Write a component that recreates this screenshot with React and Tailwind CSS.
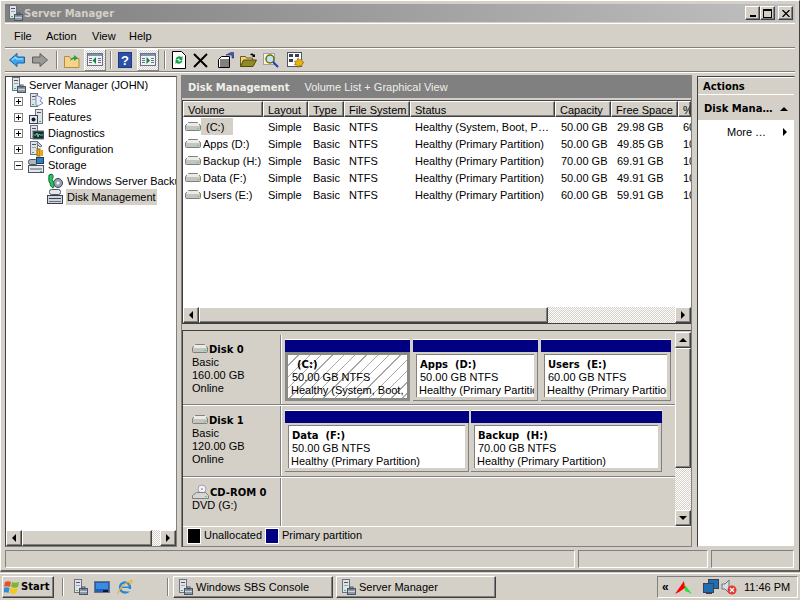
import React from 'react';

const raised = 'border border-t-white border-l-white border-r-[#404040] border-b-[#404040] shadow-[inset_-1px_-1px_0_#808080]';
const sunken = 'border border-t-[#808080] border-l-[#808080] border-r-white border-b-white';
const dither = 'bg-[repeating-conic-gradient(#ffffff_0_25%,#d4d0c8_0_50%)] bg-[length:2px_2px]';
const bold = "font-bold font-['DejaVu_Sans'] text-[10px]";

const Svg = ({ w = 16, h = 16, children, className = '' }) => (
  <svg width={w} height={h} viewBox={`0 0 ${w} ${h}`} className={`shrink-0 ${className}`}>{children}</svg>
);

const Tower = () => (
  <>
    <rect x="2.5" y="0.5" width="7" height="13" fill="#dfe3e8" stroke="#6b7280" />
    <rect x="4" y="3" width="4" height="1" fill="#4b5563" />
    <rect x="4" y="6" width="4" height="1" fill="#9ca3af" />
    <rect x="4" y="11" width="2" height="1" fill="#22c55e" />
  </>
);

const ServerIcon = () => (
  <Svg>
    <Tower />
    <rect x="7.5" y="9.5" width="8" height="6" fill="#8d99a6" stroke="#4b5563" />
    <rect x="10" y="8" width="3" height="2" fill="none" stroke="#4b5563" />
    <rect x="8" y="12" width="7" height="1" fill="#d1d5db" />
  </Svg>
);

const RolesIcon = () => (
  <Svg>
    <Tower />
    <path d="M8 2l6 3-2 3 3 2-5 3-2-1z" fill="#eef2ff" stroke="#7c8db5" />
  </Svg>
);

const FeaturesIcon = () => (
  <Svg>
    <rect x="7.5" y="0.5" width="7" height="14" fill="#dfe3e8" stroke="#6b7280" />
    <rect x="9" y="3" width="4" height="1" fill="#4b5563" />
    <rect x="1.5" y="6.5" width="8" height="8" fill="#e5e7eb" stroke="#374151" />
    <circle cx="5.5" cy="10.5" r="2" fill="#111827" />
    <rect x="11" y="12" width="2" height="1" fill="#22c55e" />
  </Svg>
);

const DiagIcon = () => (
  <Svg>
    <Tower />
    <rect x="5" y="6" width="11" height="8" fill="#1f2937" stroke="#6b7280" />
    <path d="M6 10h2l1-2 1 4 1-3 1 1h3" fill="none" stroke="#4ade80" />
  </Svg>
);

const ConfigIcon = () => (
  <Svg>
    <Tower />
    <path d="M10 1l4 4-2 1-3-3z" fill="#cbd5e1" stroke="#6b7280" />
    <rect x="9" y="8" width="3" height="7" fill="#eab308" stroke="#a16207" />
    <rect x="13" y="9" width="2" height="6" fill="#f59e0b" />
  </Svg>
);

const StorageIcon = () => (
  <Svg>
    <rect x="0.5" y="2.5" width="9" height="5" rx="2" fill="#aeb6bf" stroke="#4b5563" />
    <rect x="8.5" y="0.5" width="7" height="6" fill="#2f7fc1" stroke="#1e3a5f" />
    <rect x="0.5" y="8.5" width="15" height="7" fill="#e5e7eb" stroke="#4b5563" />
    <rect x="2" y="11" width="12" height="2" fill="#9ca3af" />
    <rect x="12" y="14" width="2" height="1" fill="#22c55e" />
  </Svg>
);

const BackupIcon = () => (
  <Svg>
    <circle cx="11" cy="10" r="4.5" fill="#9ca3af" stroke="#374151" />
    <circle cx="11" cy="10" r="1.5" fill="#f3f4f6" />
    <path d="M5 1c2 2 1 4 0 6 2 2 3 5 1 8-2-1-3-3-3-5C1 8 2 5 2 2z" fill="#22c55e" stroke="#166534" />
  </Svg>
);

const DiskMgmtIcon = () => (
  <Svg>
    <rect x="2.5" y="0.5" width="11" height="5" rx="2" fill="#e5e7eb" stroke="#4b5563" />
    <rect x="0.5" y="6.5" width="15" height="8" fill="#d1d5db" stroke="#374151" />
    <rect x="2" y="9" width="12" height="1" fill="#374151" />
    <rect x="2" y="12" width="12" height="1" fill="#6b7280" />
  </Svg>
);

const DriveIcon = () => (
  <Svg w={16} h={10}>
    <path d="M3.5 0.5h9l3 3v4a1 1 0 0 1-1 1h-13a1 1 0 0 1-1-1v-4z" fill="#c4c4c0" stroke="#808080" />
    <rect x="2" y="1" width="12" height="3" fill="#ecebe6" />
    <rect x="12" y="6" width="2" height="1" fill="#4ade80" />
  </Svg>
);

const CdIcon = () => (
  <Svg w={17} h={16}>
    <circle cx="10" cy="5" r="4" fill="#f3f4f6" stroke="#9ca3af" />
    <circle cx="10" cy="5" r="1" fill="#c084fc" />
    <path d="M4.5 8.5h9l3 3v3h-16v-3z" fill="#d6d6d2" stroke="#808080" />
    <rect x="13" y="12" width="2" height="1" fill="#4ade80" />
  </Svg>
);

const Arrow = ({ dir }) => {
  const paths = {
    l: 'M4 0v8L0 4z',
    r: 'M0 0v8l4-4z',
    u: 'M4 0L8 4H0z',
    d: 'M0 0h8L4 4z',
  };
  const size = dir === 'l' || dir === 'r' ? [4, 8] : [8, 4];
  return <Svg w={size[0]} h={size[1]}><path d={paths[dir]} fill="#000" /></Svg>;
};

const ScrollBtn = ({ dir }) => (
  <div className={`w-4 h-4 shrink-0 flex items-center justify-center bg-[#d4d0c8] ${raised}`}>
    <Arrow dir={dir} />
  </div>
);

const Expander = ({ open }) => (
  <Svg w={9} h={9}>
    <rect x="0.5" y="0.5" width="8" height="8" fill="#fff" stroke="#808080" />
    <rect x="2" y="4" width="5" height="1" fill="#000" />
    {!open && <rect x="4" y="2" width="1" height="5" fill="#000" />}
  </Svg>
);

const TreeRow = ({ icon, text, open }) => (
  <div className="h-4 flex items-center pl-[8px] whitespace-nowrap">
    <Expander open={open} />
    <div className="ml-[5px]">{icon}</div>
    <span className="ml-[4px]">{text}</span>
  </div>
);

const columns = [
  ['Volume', 80],
  ['Layout', 45],
  ['Type', 36],
  ['File System', 66],
  ['Status', 145],
  ['Capacity', 56],
  ['Free Space', 67],
  ['%', 13],
];

const volumes = [
  ['(C:)', 'Healthy (System, Boot, P…', '50.00 GB', '29.98 GB', '60'],
  ['Apps (D:)', 'Healthy (Primary Partition)', '50.00 GB', '49.85 GB', '10'],
  ['Backup (H:)', 'Healthy (Primary Partition)', '70.00 GB', '69.91 GB', '10'],
  ['Data (F:)', 'Healthy (Primary Partition)', '50.00 GB', '49.91 GB', '10'],
  ['Users (E:)', 'Healthy (Primary Partition)', '60.00 GB', '59.91 GB', '10'],
];

const Partition = ({ w, title, size, status, selected, mr = 'mr-[3px]' }) => (
  <div className={`${w} ${mr} shrink-0 flex flex-col`}>
    <div className="h-[13px] shrink-0 bg-[#000080] border-t border-white" />
    <div className={`flex-1 min-h-0 ${selected ? 'p-[3px] bg-[#8a8a84]' : 'p-[3px] pt-[2px] bg-[#d4d0c8] border-b border-r border-[#808080]'}`}>
      <div className={`h-full overflow-hidden whitespace-nowrap pt-[3px] leading-[13px] ${selected ? 'pl-[3px] bg-[repeating-linear-gradient(135deg,#ffffff_0_7px,#a8a8a8_7px_8px)]' : 'pl-[2px] bg-white border-t border-l border-[#808080]'}`}>
        <div className={`${bold} whitespace-pre ${selected ? 'pl-[6px]' : 'pl-[1px]'}`}>{title}</div>
        <div className="pl-[1px]">{size}</div>
        <div>{status}</div>
      </div>
    </div>
  </div>
);

const DiskLabel = ({ icon, name, lines }) => (
  <div className="w-[98px] shrink-0 pl-[9px] pt-[6px] leading-[13px] border-r border-[#808080] shadow-[1px_0_0_#fff] overflow-hidden">
    <div className="flex items-center h-[15px]">
      {icon}
      <span className={`${bold} ml-[1px] pt-[2px]`}>{name}</span>
    </div>
    {lines.map((l) => <div key={l}>{l}</div>)}
  </div>
);

const ToolSep = ({ className }) => <div className={`w-[2px] h-[18px] border-l border-[#808080] bg-white shrink-0 ${className}`} />;

const ToggleBtn = ({ side, className }) => (
  <div className={`w-[22px] h-[22px] flex items-center justify-center shrink-0 ${dither} border border-t-white border-l-white border-r-[#808080] border-b-[#808080] ${className}`}>
    <Svg>
      <rect x="0.5" y="1.5" width="15" height="12" fill="#eef2f7" stroke="#6b7280" />
      <rect x="1" y="2" width="14" height="2" fill="#7c93b2" />
      <rect x="2" y="6" width="3" height="1" fill="#6b7280" />
      <rect x="2" y="8" width="3" height="1" fill="#6b7280" />
      <rect x="2" y="10" width="3" height="1" fill="#6b7280" />
      <rect x="11" y="6" width="3" height="1" fill="#6b7280" />
      <rect x="11" y="8" width="3" height="1" fill="#6b7280" />
      <rect x="11" y="10" width="3" height="1" fill="#6b7280" />
      <path d={side === 'l' ? 'M9 5v7L5.5 8.5z' : 'M6.5 5v7L10 8.5z'} fill="#15803d" />
    </Svg>
  </div>
);

const Toolbar = () => (
  <div className="h-6 flex items-center pl-[4px] border-t border-white border-b border-b-[#808080]">
    <Svg>
      <path d="M0.5 8L8 1.5V5h7.500v6H8v3.500z" fill="#38a6f0" stroke="#1d5fa8" />
      <path d="M3 8l4-3v2h7" fill="none" stroke="#bfe6ff" />
    </Svg>
    <Svg className="ml-[7px]">
      <path d="M15.500 8L8 1.500V5H0.500v6H8v3.500z" fill="#9a9a96" stroke="#5d5d5a" />
    </Svg>
    <ToolSep className="ml-[8px]" />
    <Svg className="ml-[6px]">
      <path d="M0.500 4.500h5l1 2h8.500v9H0.500z" fill="#f2d58a" stroke="#b58d3c" />
      <path d="M6 9c1-3 3-4 4-4V3l4 3-4 3V7c-1 0-3 1-4 2z" fill="#2ea043" />
    </Svg>
    <ToggleBtn side="l" className="ml-[4px]" />
    <ToolSep className="ml-[4px]" />
    <Svg w={14} h={18} className="ml-[6px]">
      <rect x="0.500" y="1.500" width="13" height="15" fill="#2b4fa8" stroke="#1e3a7a" />
      <text x="7" y="14" textAnchor="middle" fontSize="13" fontWeight="bold" fill="#fff" fontFamily="Liberation Sans">?</text>
    </Svg>
    <ToggleBtn side="r" className="ml-[5px]" />
    <ToolSep className="ml-[5px]" />
    <Svg w={14} h={18} className="ml-[6px]">
      <path d="M0.500 0.500h9l4 4v13h-13z" fill="#fff" stroke="#000" />
      <path d="M3.500 8a4 4 0 0 1 6-2l1-1v4H7l1-1a2 2 0 0 0-3 1zM10.500 10a4 4 0 0 1-6 2l-1 1V9h3.500l-1 1a2 2 0 0 0 3-1z" fill="#15a34a" />
    </Svg>
    <Svg className="ml-[7px]">
      <path d="M1 2l13 13M14 2L1 15" stroke="#000" strokeWidth="2" fill="none" />
    </Svg>
    <Svg w={17} h={16} className="ml-[8px]">
      <path d="M4.500 4.500h8v11h-11v-8z" fill="#fff" stroke="#000" />
      <path d="M3 8h9M3 10h9M3 12h9M3 14h9" stroke="#000" />
      <path d="M9 3l6-3 2 1v5h-2V3z" fill="#4a5fb0" stroke="#1e2a6b" strokeWidth="0.600" />
    </Svg>
    <Svg w={17} h={16} className="ml-[6px]">
      <path d="M0.500 14.500v-10h5l1 1.500h6v2" fill="#f2d58a" stroke="#6b5a14" />
      <path d="M0.500 14.500l3-6.500h13l-3.500 6.500z" fill="#8f8a22" stroke="#4f4b0f" />
      <path d="M10 3c1-2 3-2 4 0l1-1v3h-3l1-1c-1-1-2-1-3-1z" fill="#000" />
    </Svg>
    <Svg className="ml-[6px]">
      <rect x="0.500" y="1.500" width="11" height="11" fill="#fdf6c8" stroke="#9ca3af" />
      <circle cx="7" cy="7" r="4" fill="#bfe3f3" stroke="#6b6b10" strokeWidth="1.500" />
      <path d="M10 10l5 5" stroke="#1d3fae" strokeWidth="2" />
    </Svg>
    <Svg w={17} h={16} className="ml-[8px]">
      <rect x="0.500" y="0.500" width="14" height="14" fill="#fff" stroke="#4b5563" />
      <rect x="2" y="2" width="4" height="3" fill="#374151" />
      <rect x="8" y="2" width="4" height="3" fill="#374151" />
      <rect x="2" y="7" width="4" height="3" fill="#374151" />
      <path d="M11 6l1.500 2 2.500-1 0 2.500 2 1-2 1.500 0 2.500-2.500-1-1.500 2-1-2.500-2.500 0 1-2-1-2 2.500 0z" fill="#eab308" stroke="#78600a" strokeWidth="0.600" />
    </Svg>
  </div>
);

const TitleBtn = ({ children }) => (
  <div className={`w-[15px] h-[14px] bg-[#d4d0c8] flex items-center justify-center ${raised}`}>{children}</div>
);

const TaskBtn = ({ icon, text, className }) => (
  <div className={`w-[160px] h-[22px] shrink-0 flex items-center pl-[3px] bg-[#d4d0c8] ${raised} ${className}`}>
    {icon}
    <span className="ml-[3px]">{text}</span>
  </div>
);

const FlagIcon = () => (
  <Svg>
    <path d="M1 3c2-1 4-1 6 0l-1 5c-2-1-4-1-6 0z" fill="#e8502a" />
    <path d="M8 3c2 1 4 1 7 0l-1 5c-2 1-5 1-7 0z" fill="#7cb82f" />
    <path d="M0 9c2-1 4-1 5.500 0l-1 5c-2-1-4-1-5.500 0z" fill="#2a8fd8" />
    <path d="M6.500 9c2 1 5 1 7 0l-1 5c-2 1-5 1-7 0z" fill="#f5c518" />
  </Svg>
);

const IeIcon = () => (
  <Svg>
    <circle cx="8" cy="8.500" r="5" fill="none" stroke="#2b86d9" strokeWidth="2.500" />
    <rect x="4" y="7.500" width="9" height="1.500" fill="#2b86d9" />
    <rect x="9" y="10" width="6" height="2.500" fill="#d4d0c8" />
    <path d="M1 15c0-4 6-11 13-13-1-1 1-1 1 0 0 2-2 3-3 3" fill="none" stroke="#f0b429" strokeWidth="1.200" />
  </Svg>
);

export default function App() {
  return (
    <div className="w-[800px] h-[600px] overflow-hidden bg-[#d4d0c8] text-[11px] text-black font-['Liberation_Sans',sans-serif] leading-none">
      {/* window */}
      <div className="h-[572px] flex flex-col pt-[3px] px-[4px] border-t border-l border-t-white border-l-white border-r border-r-[#404040] border-b-2 border-b-[#606060]">
        <div className="h-[18px] shrink-0 flex items-center px-[2px] bg-gradient-to-r from-[#808080] to-[#c0c0c0]">
          <ServerIcon />
          <span className={`ml-[1px] pt-[2px] text-[#d4d0c8] ${bold}`}>Server Manager</span>
          <div className="ml-auto flex">
            <TitleBtn><div className="w-[6px] h-[2px] bg-black mt-[6px]" /></TitleBtn>
            <TitleBtn><div className="w-[9px] h-[9px] border border-black border-t-2" /></TitleBtn>
            <div className="ml-[3px]">
              <TitleBtn>
                <Svg w={8} h={7}><path d="M0.500 0l7 7M7.500 0l-7 7" stroke="#000" strokeWidth="1.300" /></Svg>
              </TitleBtn>
            </div>
          </div>
        </div>

        <div className="mt-[1px] border-t border-white">
          <div className="h-6 flex items-center pl-[9px] pt-[2px] border-b border-b-[#808080]">
            <span className="w-[32px]">File</span>
            <span className="w-[46px]">Action</span>
            <span className="w-[37px]">View</span>
            <span>Help</span>
          </div>
          <Toolbar />
        </div>

        <div className="flex-1 min-h-0 flex pt-[2px] border-t border-white">
          {/* tree */}
          <div className="w-[172px] shrink-0 mt-[1px] mb-[1px] flex flex-col border border-t-[#404040] border-l-[#404040] border-r-[#808080] border-b-[#808080] bg-white">
            <div className="flex-1 min-h-0 overflow-hidden">
              <div className="h-4 flex items-center pl-[4px] whitespace-nowrap">
                <ServerIcon />
                <span className="ml-[3px]">Server Manager (JOHN)</span>
              </div>
              <TreeRow icon={<RolesIcon />} text="Roles" />
              <TreeRow icon={<FeaturesIcon />} text="Features" />
              <TreeRow icon={<DiagIcon />} text="Diagnostics" />
              <TreeRow icon={<ConfigIcon />} text="Configuration" />
              <TreeRow icon={<StorageIcon />} text="Storage" open />
              <div className="h-4 flex items-center pl-[41px] whitespace-nowrap">
                <BackupIcon />
                <span className="ml-[4px]">Windows Server Backup</span>
              </div>
              <div className="h-4 flex items-center pl-[41px] whitespace-nowrap">
                <DiskMgmtIcon />
                <span className="ml-[3px] px-[1px] h-4 flex items-center bg-[#d4d0c8]">Disk Management</span>
              </div>
            </div>
            <div className="h-4 shrink-0 flex bg-[#d4d0c8]">
              <ScrollBtn dir="l" />
              <div className={`flex-1 bg-[#d4d0c8] ${raised}`} />
              <div className={`w-2 ${dither}`} />
              <ScrollBtn dir="r" />
            </div>
          </div>

          {/* center */}
          <div className="w-[511px] shrink-0 ml-[4px] mb-[1px] flex flex-col border-l border-l-[#808080] border-r border-r-[#808080]">
            <div className="h-[23px] shrink-0 flex items-center pl-[6px] pt-[2px] bg-[#808080] text-[#f0eee8]">
              <span className={bold}>Disk Management</span>
              <span className="ml-[15px]">Volume List + Graphical View</span>
            </div>
            <div className="h-[2px] shrink-0 bg-[#d4d0c8]" />
            <div className="h-[224px] shrink-0 flex flex-col bg-white border-l border-t border-b border-[#404040]">
              <div className="h-[16px] shrink-0 flex overflow-hidden">
                {columns.map(([name, w]) => (
                  <div key={name} style={{ width: w }} className={`shrink-0 flex items-center pl-[4px] pt-[2px] whitespace-nowrap overflow-hidden bg-[#d4d0c8] ${raised}`}>{name}</div>
                ))}
              </div>
              <div className="flex-1 min-h-0 pt-[1px] overflow-hidden">
                {volumes.map((v, i) => (
                  <div key={v[0]} className="h-[17px] flex items-center whitespace-nowrap">
                    <div className="w-[80px] shrink-0 flex items-center pl-[2px] h-full">
                      <DriveIcon />
                      <span className={i === 0 ? 'pl-[5px] pr-[9px] pt-[2px] h-full flex items-center bg-[#d4d0c8]' : 'ml-[2px] pt-[2px]'}>{v[0]}</span>
                    </div>
                    <div className="w-[45px] shrink-0 pl-[5px] pt-[2px]">Simple</div>
                    <div className="w-[36px] shrink-0 pl-[5px] pt-[2px]">Basic</div>
                    <div className="w-[66px] shrink-0 pl-[5px] pt-[2px]">NTFS</div>
                    <div className="w-[145px] shrink-0 pl-[5px] pt-[2px] overflow-hidden">{v[1]}</div>
                    <div className="w-[56px] shrink-0 pl-[6px] pt-[2px]">{v[2]}</div>
                    <div className="w-[67px] shrink-0 pl-[6px] pt-[2px]">{v[3]}</div>
                    <div className="w-[13px] shrink-0 pl-[5px] pt-[2px] overflow-hidden">{v[4]}</div>
                  </div>
                ))}
              </div>
              <div className="h-4 shrink-0 flex">
                <ScrollBtn dir="l" />
                <div className={`w-[349px] bg-[#d4d0c8] ${raised}`} />
                <div className={`flex-1 ${dither}`} />
                <ScrollBtn dir="r" />
              </div>
            </div>
            <div className="h-[7px] shrink-0 bg-[#d4d0c8] border-b border-b-[#404040]" />
            <div className="flex-1 min-h-0 flex flex-col border-l border-[#404040]">
              <div className="flex-1 min-h-0 flex">
                <div className="flex-1 min-w-0 flex flex-col pt-[4px] overflow-hidden">
                  <div className="h-[70px] shrink-0 flex border-b border-[#808080] shadow-[0_1px_0_#fff]">
                    <DiskLabel icon={<DriveIcon />} name="Disk 0" lines={['Basic', '160.00 GB', 'Online']} />
                    <div className="flex ml-[2px] pl-[2px] pt-[4px] pb-[3px]">
                      <Partition w="w-[125px]" selected title="(C:)" size="50.00 GB NTFS" status="Healthy (System, Boot," />
                      <Partition w="w-[125px]" title="Apps  (D:)" size="50.00 GB NTFS" status="Healthy (Primary Partition)" />
                      <Partition w="w-[130px]" title="Users  (E:)" size="60.00 GB NTFS" status="Healthy (Primary Partition)" mr="" />
                    </div>
                  </div>
                  <div className="h-[71px] mt-[1px] shrink-0 flex border-b border-[#808080] shadow-[0_1px_0_#fff]">
                    <DiskLabel icon={<DriveIcon />} name="Disk 1" lines={['Basic', '120.00 GB', 'Online']} />
                    <div className="flex ml-[2px] pl-[2px] pt-[4px] pb-[4px]">
                      <Partition w="w-[184px]" title="Data  (F:)" size="50.00 GB NTFS" status="Healthy (Primary Partition)" mr="mr-[2px]" />
                      <Partition w="w-[191px]" title="Backup  (H:)" size="70.00 GB NTFS" status="Healthy (Primary Partition)" mr="" />
                    </div>
                  </div>
                  <div className="flex-1 mt-[1px] min-h-0 flex">
                    <DiskLabel icon={<CdIcon />} name="CD-ROM 0" lines={['DVD (G:)']} />
                  </div>
                </div>
                <div className="w-4 shrink-0 pt-[1px] flex flex-col">
                  <ScrollBtn dir="u" />
                  <div className={`h-[120px] bg-[#d4d0c8] ${raised}`} />
                  <div className={`flex-1 ${dither}`} />
                  <ScrollBtn dir="d" />
                </div>
              </div>
              <div className="h-[21px] shrink-0 flex items-center pl-[5px] pb-[2px] border-t border-white border-b border-b-[#808080]">
                <div className="w-3 h-[14px] bg-black outline outline-1 outline-white" />
                <span className="ml-[4px] w-[56px]">Unallocated</span>
                <div className="ml-[6px] w-3 h-[14px] bg-[#000080] outline outline-1 outline-white" />
                <span className="ml-[4px]">Primary partition</span>
              </div>
            </div>
          </div>

          {/* actions */}
          <div className="flex-1 min-w-0 ml-[5px] mt-[1px] mb-[1px] flex flex-col bg-white border border-t-[#404040] border-l-[#404040] border-r-[#d4d0c8] border-b-[#d4d0c8]">
            <div className={`h-[16px] mt-[1px] shrink-0 flex items-center pl-[5px] pt-[2px] bg-[#d4d0c8] ${bold}`}>Actions</div>
            <div className={`h-[25px] mt-[1px] shrink-0 flex items-center pl-[6px] pr-[6px] pt-[2px] whitespace-nowrap bg-[#d4d0c8] ${bold}`}>
              <span>Disk Mana…</span>
              <div className="ml-auto"><Arrow dir="u" /></div>
            </div>
            <div className="h-[24px] flex items-center pl-[29px] pr-[7px]">
              <span>More …</span>
              <div className="ml-auto"><Arrow dir="r" /></div>
            </div>
          </div>
        </div>

        {/* status */}
        <div className="h-[22px] shrink-0 flex gap-[3px] py-[2px]">
          <div className={`w-[570px] ${sunken}`} />
          <div className={`w-[130px] ${sunken}`} />
          <div className={`flex-1 mr-[1px] ${sunken}`} />
        </div>
      </div>

      {/* taskbar */}
      <div className="h-[27px] mt-[1px] flex items-center px-[2px] border-t border-white">
        <div className={`w-[52px] h-[22px] shrink-0 flex items-center pl-[1px] bg-[#d4d0c8] ${raised}`}>
          <FlagIcon />
          <span className={`ml-[1px] ${bold}`}>Start</span>
        </div>
        <ToolSep className="ml-[8px]" />
        <div className="ml-[8px]"><ServerIcon /></div>
        <Svg className="ml-[6px]">
          <rect x="0.500" y="2.500" width="15" height="11" fill="#1f5fb4" stroke="#6b7280" />
          <rect x="2" y="4" width="12" height="6" fill="#3b8be0" />
          <rect x="9" y="11" width="5" height="2" fill="#111827" />
        </Svg>
        <div className="ml-[7px]"><IeIcon /></div>
        <ToolSep className="ml-[34px]" />
        <TaskBtn className="ml-[4px]" icon={<ServerIcon />} text="Windows SBS Console" />
        <TaskBtn className="ml-[3px]" icon={<ServerIcon />} text="Server Manager" />
        <div className={`ml-auto w-[141px] h-[22px] flex items-center pl-[4px] ${sunken}`}>
          <span className="font-bold text-[12px] w-[8px]">«</span>
          <Svg w={17} h={14} className="ml-[5px]">
            <path d="M0 14L9 1l1 7-6 4z" fill="#f00" />
            <path d="M10 5l7 9-4-2-3-1z" fill="#22e03a" />
          </Svg>
          <Svg className="ml-[11px]">
            <rect x="5.500" y="0.500" width="10" height="9" fill="#1f6fb0" stroke="#374151" />
            <rect x="0.500" y="4.500" width="10" height="9" fill="#1f6fb0" stroke="#374151" />
            <rect x="3" y="14" width="6" height="1" fill="#374151" />
          </Svg>
          <Svg className="ml-[2px]">
            <path d="M1 5h3l4-4v13l-4-4H1z" fill="#d6dfe8" stroke="#6b7280" />
            <circle cx="11" cy="11" r="4.500" fill="#e23b2e" />
            <path d="M9 9l4 4M13 9l-4 4" stroke="#fff" strokeWidth="1.200" />
          </Svg>
          <span className="ml-[7px]">11:46 PM</span>
        </div>
      </div>
    </div>
  );
}
